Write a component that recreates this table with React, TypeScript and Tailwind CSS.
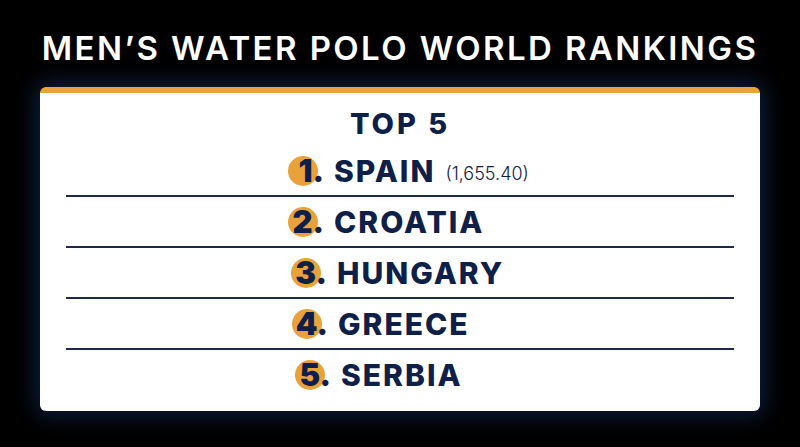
const rows = [
  { rank: "1", name: "SPAIN", points: "(1,655.40)", shift: "ml-[0px]" },
  { rank: "2", name: "CROATIA", points: "", shift: "ml-[0px]" },
  { rank: "3", name: "HUNGARY", points: "", shift: "ml-[3px]" },
  { rank: "4", name: "GREECE", points: "", shift: "ml-[4px]" },
  { rank: "5", name: "SERBIA", points: "", shift: "ml-[7px]" },
];

function RankRow({
  rank,
  name,
  points,
  shift,
  last,
}: {
  rank: string;
  name: string;
  points: string;
  shift: string;
  last: boolean;
}) {
  return (
    <div
      className={
        last
          ? "mx-[26px] flex h-[49px] items-center pl-[222px]"
          : "mx-[26px] flex h-[51px] items-center border-b-2 border-[#1b2a4a] pl-[222px]"
      }
    >
      <div className={`flex items-center ${shift}`}>
        <div className="relative h-[30px] w-[36px] shrink-0">
          <div className="absolute left-0 top-0 h-[30px] w-[30px] rounded-full bg-[#e9a23b]" />
          <span className="absolute right-0 top-[-4px] text-[31px] font-black leading-[38px] text-[#0f2048]">
            {rank}.
          </span>
        </div>
        <span className="ml-[10px] text-[30px] font-extrabold leading-none tracking-[2px] text-[#0f2048]">
          {name}
        </span>
        {points ? (
          <span className="ml-[10px] mt-[6px] text-[18px] font-light text-[#0f2048]">
            {points}
          </span>
        ) : null}
      </div>
    </div>
  );
}

export default function App() {
  return (
    <div
      className="flex h-[447px] w-[800px] flex-col items-center bg-black"
      style={{ fontFamily: "Inter, 'Noto Sans', sans-serif" }}
    >
      <h1 className="mt-[30px] h-[36px] text-[33px] font-semibold leading-[36px] tracking-[2.4px] text-white">
        MEN’S WATER POLO WORLD RANKINGS
      </h1>
      <div className="mt-[21px] w-[720px] rounded-md border-t-[6px] border-[#e9a23b] bg-white pb-[12px] shadow-[0_0_22px_4px_rgba(28,58,120,0.55)]">
        <div className="mb-[4px] mt-[13px] h-[36px] text-center text-[29px] font-extrabold leading-[36px] tracking-[3px] text-[#0f2048]">
          TOP 5
        </div>
        {rows.map((r, i) => (
          <RankRow key={r.rank} {...r} last={i === rows.length - 1} />
        ))}
      </div>
    </div>
  );
}
